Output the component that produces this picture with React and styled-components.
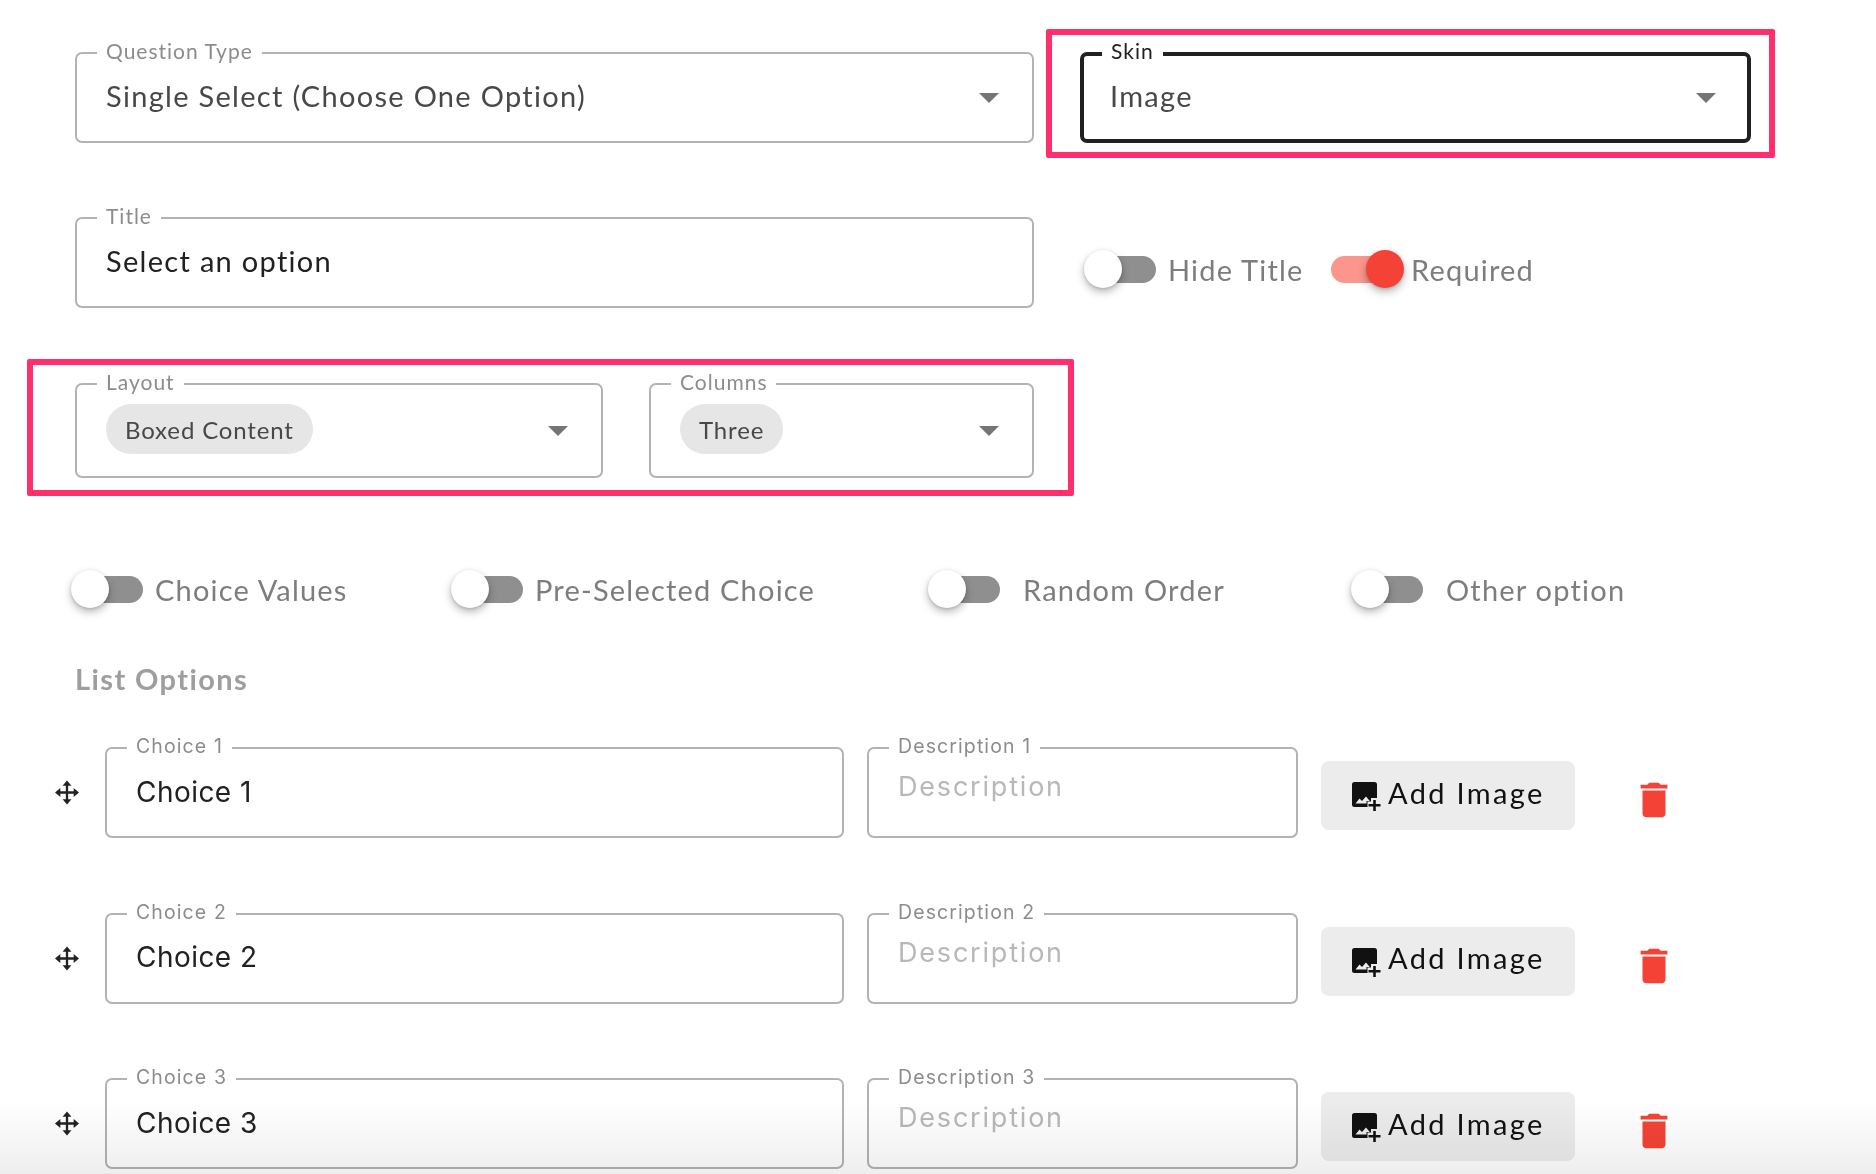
import React from 'react';
import styled, { createGlobalStyle } from 'styled-components';

const GlobalStyle = createGlobalStyle`
  html, body {
    margin: 0;
    padding: 0;
    background: #fff;
    overflow: hidden;
  }
  * {
    box-sizing: border-box;
  }
`;

const KARLA = `"Lato", "Liberation Sans", sans-serif`;
const INTER = `"Inter", "Liberation Sans", sans-serif`;

const Page = styled.div`
  position: relative;
  width: 1876px;
  height: 1174px;
  padding: 52px 0 0 75px;
  overflow: hidden;
  font-family: ${KARLA};
`;

const Row = styled.div`
  display: flex;
  align-items: flex-start;
  gap: ${p => p.$gap || 46}px;
  margin-bottom: ${p => p.$mb || 74}px;
`;

const Highlight = styled.div`
  position: relative;
  display: flex;
  gap: 46px;
  &::after {
    content: '';
    position: absolute;
    inset: ${p => p.$inset};
    border: 6px solid #ff2f6e;
    border-radius: 2px;
    pointer-events: none;
  }
`;

const Field = styled.div`
  position: relative;
  flex: none;
  display: flex;
  align-items: center;
  width: ${p => p.$w}px;
  height: ${p => p.$h || 91}px;
  margin-left: ${p => p.$ml || 0}px;
  padding-left: ${p => (p.$focus ? 26 : 29)}px;
  padding-right: ${p => (p.$focus ? 31 : p.$inter ? 0 : 33)}px;
  border: ${p => (p.$focus ? '4px solid #212121' : '2px solid #b3b3b3')};
  border-radius: 7px;
  font-family: ${p => (p.$inter ? INTER : KARLA)};
`;

const FloatLabel = styled.span`
  position: absolute;
  top: ${p => (p.$focus ? -18 : -16)}px;
  left: ${p => (p.$focus ? 18 : 20)}px;
  padding: 0 9px;
  background: #fff;
  font-size: ${p => (p.$inter ? 19.5 : 21)}px;
  line-height: 26px;
  letter-spacing: ${p => (p.$inter ? 1.1 : 1)}px;
  color: ${p => (p.$focus ? '#212121' : '#8c8c8c')};
  white-space: nowrap;
`;

const Value = styled.span`
  flex: 1;
  margin-top: ${p => (p.$inter ? -2 : -4)}px;
  font-size: ${p => (p.$inter ? 28 : 29)}px;
  letter-spacing: ${p => (p.$inter ? 0.45 : 1.3)}px;
  color: ${p => (p.$muted ? '#484848' : '#212121')};
  white-space: nowrap;
`;

const Placeholder = styled.span`
  margin-top: -12px;
  font-size: 27px;
  letter-spacing: 1.8px;
  color: #b8b8b8;
`;

const Chip = styled.span`
  display: inline-flex;
  align-items: center;
  height: 50px;
  padding: 0 19px;
  margin: -3px auto 0 0;
  border-radius: 25px;
  background: #e6e6e6;
  font-size: 24px;
  letter-spacing: 0.85px;
  color: #484848;
`;

const Caret = styled.i`
  flex: none;
  width: 0;
  height: 0;
  border-left: 10px solid transparent;
  border-right: 10px solid transparent;
  border-top: 10px solid #757575;
`;

const ToggleGroup = styled.div`
  display: grid;
  grid-template-columns: ${p => p.$cols};
  align-items: center;
  margin: ${p => p.$margin || 0};
`;

const ToggleItem = styled.label`
  display: flex;
  align-items: center;
  gap: ${p => p.$gap || 12}px;
  font-size: 29px;
  letter-spacing: 1.2px;
  color: #7d7d7d;
  white-space: nowrap;
`;

const Track = styled.span`
  position: relative;
  flex: none;
  width: 68px;
  height: 27px;
  border-radius: 14px;
  background: ${p => (p.$on ? '#fb968c' : '#8f8f8f')};
  &::after {
    content: '';
    position: absolute;
    top: -6px;
    left: ${p => (p.$on ? '35px' : '-4px')};
    width: 38px;
    height: 38px;
    border-radius: 50%;
    background: ${p => (p.$on ? '#f44336' : '#fff')};
    box-shadow: 0 4px 9px rgba(0, 0, 0, 0.28), 0 1px 3px rgba(0, 0, 0, 0.14);
  }
`;

const SectionTitle = styled.h3`
  margin: 55px 0 51px 0;
  font-size: 29px;
  line-height: 34px;
  font-weight: 700;
  letter-spacing: 1.4px;
  color: #9e9e9e;
`;

const ChoiceList = styled.div`
  display: flex;
  flex-direction: column;
  gap: 74.5px;
  margin-left: -20px;
`;

const ChoiceRow = styled.div`
  display: grid;
  grid-template-columns: 50px 740px 453px 278px 101px;
  align-items: start;
`;

const Handle = styled.div`
  height: 91px;
  display: flex;
  align-items: center;
  justify-content: center;
  padding-right: 26px;
  color: #222;
`;

const AddImage = styled.button`
  display: flex;
  align-items: center;
  gap: 7px;
  width: 254px;
  height: 69px;
  margin: 14px 0 0 23px;
  padding: 0 0 7px 31px;
  border: 0;
  border-radius: 8px;
  background: #ececec;
  font-family: ${KARLA};
  font-size: 29px;
  letter-spacing: 2.35px;
  color: #111;
  svg {
    flex: none;
    margin-top: 9px;
  }
`;

const Trash = styled.div`
  margin: 30px 0 0 55px;
  color: #f44336;
`;

const BottomFade = styled.div`
  position: absolute;
  left: 0;
  right: 0;
  bottom: 0;
  height: 74px;
  background: linear-gradient(to bottom, #fff, #eeeeee);
  mix-blend-mode: multiply;
  pointer-events: none;
`;

const MoveIcon = () => (
  <svg width="27" height="27" viewBox="0 0 27 27" fill="currentColor">
    <path d="M12.200 5h2.600v17h-2.600zM5 12.200h17v2.600H5z" />
    <path d="M13.500 0l5 6h-10zM13.500 27l-5-6h10zM0 13.500l6-5v10zM27 13.500l-6 5v-10z" />
  </svg>
);

const ImageIcon = () => (
  <svg width="29" height="29" viewBox="0 0 29 29">
    <path
      fill="#111"
      fillRule="evenodd"
      d="M2.500 0h20A2.500 2.500 0 0 1 25 2.500V16h-6v3.500h-3.500V25h-13A2.500 2.500 0 0 1 0 22.500v-20A2.500 2.500 0 0 1 2.500 0zM3.500 21.500l4-5 2.500 2.500 4-4.500 3.800 4.500h-3.300v2.500z"
    />
    <path fill="#111" d="M21.200 18h2.600v4h4.700v2.600h-4.700v4.400h-2.600v-4.400h-4.700V22h4.700z" />
  </svg>
);

const TrashIcon = () => (
  <svg width="46" height="46" viewBox="0 0 24 24" fill="currentColor">
    <path d="M6 19c0 1.100.9 2 2 2h8c1.100 0 2-.9 2-2V7H6v12zM19 4h-3.500l-1-1h-5l-1 1H5v2h14V4z" />
  </svg>
);

const Toggle = ({ on, gap, children }) => (
  <ToggleItem $gap={gap}>
    <Track $on={on} />
    {children}
  </ToggleItem>
);

const choices = [1, 2, 3];

export default function App() {
  return (
    <Page>
      <GlobalStyle />
      <Row>
        <Field $w={959}>
          <FloatLabel>Question Type</FloatLabel>
          <Value $muted>Single Select (Choose One Option)</Value>
          <Caret />
        </Field>
        <Highlight $inset="-23px -24px -15px -34px">
          <Field $w={671} $focus>
            <FloatLabel $focus>Skin</FloatLabel>
            <Value $muted>Image</Value>
            <Caret />
          </Field>
        </Highlight>
      </Row>

      <Row $gap={54} $mb={75}>
        <Field $w={959}>
          <FloatLabel>Title</FloatLabel>
          <Value>Select an option</Value>
        </Field>
        <ToggleGroup $cols="243px auto" $margin="35px 0 0">
          <Toggle>Hide Title</Toggle>
          <Toggle on>Required</Toggle>
        </ToggleGroup>
      </Row>

      <Row $mb={94}>
        <Highlight $inset="-24px -40px -18px -48px">
          <Field $w={528} $h={95}>
            <FloatLabel>Layout</FloatLabel>
            <Chip>Boxed Content</Chip>
            <Caret />
          </Field>
          <Field $w={385} $h={95}>
            <FloatLabel>Columns</FloatLabel>
            <Chip>Three</Chip>
            <Caret />
          </Field>
        </Highlight>
      </Row>

      <ToggleGroup $cols="380px 477px 423px auto">
        <Toggle>Choice Values</Toggle>
        <Toggle>Pre-Selected Choice</Toggle>
        <Toggle gap={23}>Random Order</Toggle>
        <Toggle gap={23}>Other option</Toggle>
      </ToggleGroup>

      <SectionTitle>List Options</SectionTitle>

      <ChoiceList>
        {choices.map(n => (
          <ChoiceRow key={n}>
            <Handle>
              <MoveIcon />
            </Handle>
            <Field $w={739} $inter>
              <FloatLabel $inter>Choice {n}</FloatLabel>
              <Value $inter>Choice {n}</Value>
            </Field>
            <Field $w={431} $ml={22} $inter>
              <FloatLabel $inter>Description {n}</FloatLabel>
              <Placeholder>Description</Placeholder>
            </Field>
            <AddImage>
              <ImageIcon />
              Add Image
            </AddImage>
            <Trash>
              <TrashIcon />
            </Trash>
          </ChoiceRow>
        ))}
      </ChoiceList>

      <BottomFade />
    </Page>
  );
}
